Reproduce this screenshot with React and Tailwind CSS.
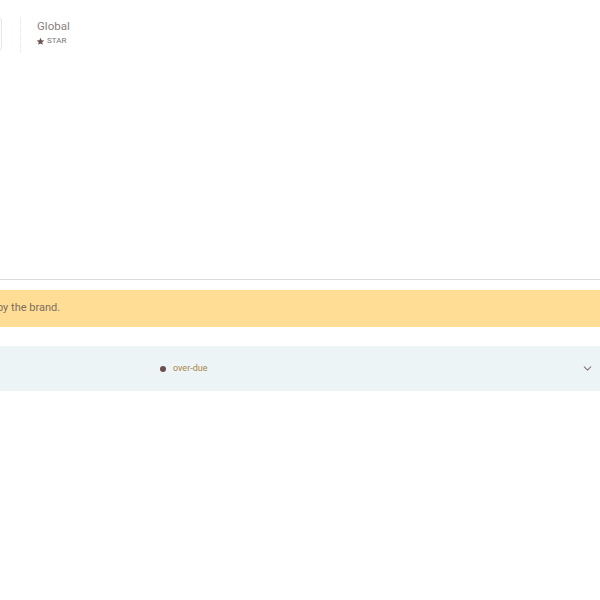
import { ChevronDown } from 'lucide-react'

function StarIcon() {
  return (
    <svg viewBox="0 0 24 24" className="w-[9px] h-[9px] fill-[#6e5252]">
      <path d="M12 2l2.9 6.6 7.1.6-5.4 4.7 1.6 7-6.2-3.7-6.2 3.7 1.6-7L2 9.2l7.1-.6z" />
    </svg>
  )
}

function App() {
  return (
    <div className="w-[600px] h-[600px] bg-white overflow-hidden" style={{ fontFamily: 'Roboto, "Noto Sans", sans-serif' }}>
      <div className="flex items-start pt-[17px] h-[280px] border-b border-[#dcdcdc]">
        <div className="-ml-[40px] w-[42px] h-[34px] rounded border border-[#dfe9ee] bg-white"></div>
        <div className="ml-[18px] h-[35px] border-l border-dotted border-[#e2e2e2]"></div>
        <div className="ml-[16px] flex flex-col">
          <span className="text-[11.5px] leading-[16px] text-[#8a7f7f] mt-[1px]">Global</span>
          <span className="flex items-center gap-[2px] mt-[2px] -ml-[1px] text-[8px] leading-[10px] font-normal text-[#7d7575]">
            <StarIcon />
            STAR
          </span>
        </div>
      </div>

      <div className="mt-[10px] h-[37px] bg-[#ffdd94] flex items-center">
        <span className="-ml-[3px] text-[11px] text-[#7d6e60]">by the brand.</span>
      </div>

      <div className="mt-[19px] h-[45px] bg-[#edf4f6] flex items-center">
        <div className="ml-[160px] flex items-center gap-[7px]">
          <span className="w-[6px] h-[6px] rounded-full bg-[#6b4f50]"></span>
          <span className="text-[9px] text-[#a88548]">over-due</span>
        </div>
        <ChevronDown className="ml-auto mr-[6px] w-[13px] h-[13px] text-[#857577]" strokeWidth={2} />
      </div>
    </div>
  )
}

export default App
